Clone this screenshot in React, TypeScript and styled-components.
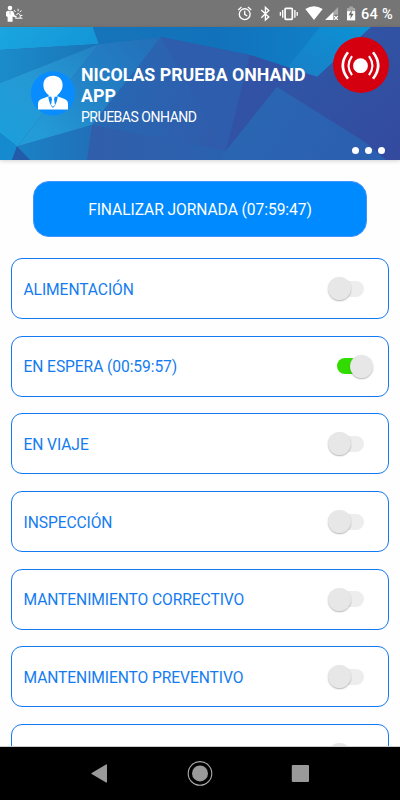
import React, { useState } from "react";
import styled, { createGlobalStyle } from "styled-components";

const GlobalStyle = createGlobalStyle`
  * { box-sizing: border-box; }
  body { margin: 0; background: #fff; font-family: Roboto, "Liberation Sans", sans-serif; }
  button { font: inherit; border: 0; padding: 0; background: none; }
  svg { display: block; flex: none; }
`;

const Screen = styled.div`
  width: 400px;
  height: 800px;
  display: flex;
  flex-direction: column;
  overflow: hidden;
  background: #fefefe;
`;

const StatusBar = styled.div`
  flex: none;
  height: 27px;
  padding: 0 7px 0 6px;
  display: flex;
  align-items: center;
  justify-content: space-between;
  background: #757575;
  color: #fff;
`;

const BatteryText = styled.span`
  font-size: 14.6px;
  font-weight: 500;
  line-height: 27px;
  letter-spacing: 0.25px;
  white-space: nowrap;
  padding-top: 1px;
`;

const StatusIcons = styled.div`
  display: flex;
  align-items: center;
`;

const Header = styled.header`
  position: relative;
  flex: none;
  height: 133px;
  display: flex;
  align-items: flex-start;
  border-bottom: 1px solid #0b2f91;
  box-shadow: 0 1px 4px rgba(0, 0, 0, 0.18);
  color: #fff;
`;

const Backdrop = styled.svg`
  position: absolute;
  inset: 0;
`;

const Profile = styled.div`
  position: relative;
  display: flex;
  align-items: flex-start;
  width: 333px;
  padding: 37px 0 0 31px;
`;

const Avatar = styled.div`
  flex: none;
  margin: 7px 6px 0 0;
`;

const Name = styled.h1`
  margin: 0;
  font-size: 17.8px;
  line-height: 21px;
  font-weight: 700;
  width: 240px;
`;

const Company = styled.div`
  margin-top: 1px;
  font-size: 14px;
  line-height: 20px;
  letter-spacing: -0.47px;
`;

const HeaderActions = styled.div`
  position: relative;
  flex: 1;
  height: 100%;
  padding-top: 10px;
  display: flex;
  flex-direction: column;
`;

const Live = styled.button`
  width: 56px;
  height: 56px;
  border-radius: 50%;
  background: #d5000f;
`;

const Dots = styled.button`
  display: flex;
  gap: 6px;
  margin: 54px 0 0 19px;
`;

const Dot = styled.span`
  width: 7px;
  height: 7px;
  border-radius: 50%;
  background: #fff;
`;

const Content = styled.main`
  flex: 1;
  min-height: 0;
  overflow: hidden;
  display: flex;
  flex-direction: column;
  padding: 21px 11px 0;
`;

const EndButton = styled.button`
  flex: none;
  height: 56px;
  margin: 0 22px 21px;
  border: 1px solid #3f94ff;
  border-radius: 16px;
  background: #008aff;
  color: #fff;
  font-size: 15.6px;
  letter-spacing: -0.06px;
  padding-top: 2px;
`;

const List = styled.div`
  display: flex;
  flex-direction: column;
  gap: 16.7px;
`;

const Card = styled.div`
  flex: none;
  height: 61px;
  border: 1px solid #1478f5;
  border-radius: 11px;
  padding: 0 15px 0 11.5px;
  display: flex;
  align-items: center;
  justify-content: space-between;
  background: #fff;
  color: #147cf0;
  font-size: 15.6px;
  letter-spacing: -0.08px;
`;

const CardLabel = styled.span`
  padding-top: 2px;
  white-space: nowrap;
`;

const Toggle = styled.button<{ $on: boolean }>`
  width: 46px;
  height: 24px;
  display: flex;
  align-items: center;
  justify-content: ${(p) => (p.$on ? "flex-end" : "flex-start")};
`;

const Track = styled.span<{ $on: boolean }>`
  display: flex;
  align-items: center;
  justify-content: ${(p) => (p.$on ? "flex-end" : "flex-start")};
  width: 27px;
  height: 16px;
  margin: ${(p) => (p.$on ? "0 9px 0 0" : "0 0 0 10px")};
  border-radius: 8px;
  background: ${(p) => (p.$on ? "#32dc00" : "#ededed")};
`;

const Knob = styled.span<{ $on: boolean }>`
  flex: none;
  width: 23px;
  height: 23px;
  margin: ${(p) => (p.$on ? "0 -9px 0 0" : "0 0 0 -9px")};
  border-radius: 50%;
  background: #e7e7e7;
  box-shadow: 0 1px 1.5px rgba(0, 0, 0, 0.28);
`;

const NavBar = styled.nav`
  flex: none;
  height: 54px;
  border-top: 1px solid #ccc;
  background: #000;
  display: flex;
  justify-content: center;
  align-items: center;
  gap: 75px;
`;

const Facets = () => (
  <Backdrop width="400" height="133" viewBox="0 0 400 133">
    <defs>
      <linearGradient id="cyan" x1="0" y1="0" x2="1" y2="0.2">
        <stop offset="0" stopColor="#1aa6e0" />
        <stop offset="1" stopColor="#1497d7" />
      </linearGradient>
      <linearGradient id="band" x1="0" y1="0" x2="1" y2="0">
        <stop offset="0" stopColor="#1b8ccb" />
        <stop offset="1" stopColor="#1a74b6" />
      </linearGradient>
      <linearGradient id="wedge" x1="1" y1="0" x2="0.2" y2="1">
        <stop offset="0" stopColor="#2381c2" />
        <stop offset="0.55" stopColor="#2599d4" />
        <stop offset="1" stopColor="#1c9edb" />
      </linearGradient>
      <linearGradient id="kite" x1="0" y1="0.6" x2="1" y2="0">
        <stop offset="0" stopColor="#239bd7" />
        <stop offset="0.5" stopColor="#237fc4" />
        <stop offset="1" stopColor="#236fb8" />
      </linearGradient>
      <linearGradient id="top" x1="0" y1="0" x2="1" y2="0">
        <stop offset="0" stopColor="#1674b9" />
        <stop offset="0.55" stopColor="#1172bb" />
        <stop offset="1" stopColor="#107fc7" />
      </linearGradient>
      <linearGradient id="bright" x1="0" y1="1" x2="1" y2="0">
        <stop offset="0" stopColor="#1a7fc6" />
        <stop offset="1" stopColor="#0c92d5" />
      </linearGradient>
      <linearGradient id="centre" x1="0" y1="0" x2="1" y2="0.2">
        <stop offset="0" stopColor="#266ab5" />
        <stop offset="1" stopColor="#2f5dac" />
      </linearGradient>
      <linearGradient id="bottom" x1="0" y1="0" x2="1" y2="0">
        <stop offset="0" stopColor="#315eaa" />
        <stop offset="1" stopColor="#2a62b0" />
      </linearGradient>
      <linearGradient id="low" x1="0" y1="0" x2="1" y2="0">
        <stop offset="0" stopColor="#1a82c6" />
        <stop offset="1" stopColor="#2170b8" />
      </linearGradient>
      <linearGradient id="lens" x1="0" y1="0" x2="1" y2="0.3">
        <stop offset="0" stopColor="#2a68b4" />
        <stop offset="1" stopColor="#2b5faf" />
      </linearGradient>
      <linearGradient id="right" x1="0" y1="0" x2="1" y2="1">
        <stop offset="0" stopColor="#2e5aa9" />
        <stop offset="1" stopColor="#344a9e" />
      </linearGradient>
    </defs>
    <rect width="400" height="133" fill="#2c60ae" />
    <path d="M0 0H93L99 17L0 23Z" fill="url(#cyan)" />
    <path d="M0 23L99 17L0 56Z" fill="url(#band)" />
    <path d="M0 56L99 17L17 119.5L0 106Z" fill="url(#wedge)" />
    <path d="M93 0H168L161 10L99 17Z" fill="#1b72b6" />
    <path d="M99 17L161 10L92 98L17 119.5Z" fill="url(#kite)" />
    <path d="M93 0H320L317 50L250 28L161 10L99 17Z" fill="url(#top)" />
    <path d="M320 0H371L317 50L288 40Z" fill="url(#bright)" />
    <path d="M161 10L226 124L92 98Z" fill="url(#centre)" />
    <path d="M161 10L250 28L236 84L226 124Z" fill="#2d5dac" />
    <path d="M92 98L226 124L222 133H87Z" fill="url(#bottom)" />
    <path d="M17 119.5L92 98L87 133H30Z" fill="url(#low)" />
    <path d="M0 106L17 119.5L12 133H0Z" fill="#158ace" />
    <path d="M17 119.5L30 133H12Z" fill="#235ba8" />
    <path d="M371 0H400V133H384L277 60L250 28L317 50Z" fill="url(#right)" />
    <path d="M250 28L317 50L277 60L226 124L236 84Z" fill="#3253a5" />
    <path d="M277 60L365 115L386 133H222L226 124Z" fill="url(#lens)" />
  </Backdrop>
);

const WorkerIcon = () => (
  <svg width="17" height="18" viewBox="0 0 17 18" fill="#fff">
    <circle cx="4" cy="3" r="2.3" />
    <path d="M0 7Q0.5 5.8 4 5.8Q7 5.8 7.6 7L8.5 10L11 11.8L10.2 12.8L6.6 11.5V16.8H1.6V12L0 11Z" />
    <path d="M9.2 13.2H16.5M10.3 9.5Q13 7.2 14.2 10V13M8 5L9.5 7M12.1 3.8V6.2M15.4 5.4L13.8 7.2M14.4 10.4H16.4" stroke="#fff" strokeWidth="1" fill="none" />
    <path d="M3.5 6.6L4 10.6L4.6 6.6Z" fill="#999" />
  </svg>
);

const StatusGlyphs = () => (
  <svg width="124" height="27" viewBox="237 0 124 27" fill="#fff">
    <g fill="none" stroke="#fff" strokeWidth="1.35">
      <circle cx="244.7" cy="14.2" r="5.4" />
      <path d="M244.7 10.8V14.3L247.3 16M238.2 10L241.5 7.1M247.9 7.1L251.2 10" />
      <path d="M261.3 10L268.8 17L265.4 20V7.4L268.8 10.6L261.3 17.7" />
      <rect x="285.1" y="8.3" width="7.2" height="11.1" rx="0.8" strokeWidth="1.7" />
      <path d="M282.7 10V17.7M280.4 12V15.8M294.9 10V17.7M297.2 12V15.8" />
    </g>
    <path d="M305.3 9.1Q314 3.5 322.7 9.1L314 20.1Z" />
    <path d="M338.1 7V14.7H333.3V19.9H325.2Z" fill="#a9a9a9" />
    <path d="M333.3 12V19.9H325.2Z" />
    <path d="M334.2 16L337.8 19.8M337.8 16L334.2 19.8" stroke="#fff" strokeWidth="1.2" />
    <path d="M349.2 6.5H353V8H355.2V12H347V8H349.2Z" fill="#a5a5a5" />
    <path d="M347 11.2H355.2V20.4H347Z" />
    <path d="M352 9.8L348.6 15.2H350.8L350.2 19L353.6 13.8H351.4Z" fill="#696969" />
  </svg>
);

const AvatarIcon = () => (
  <svg width="44" height="45" viewBox="0 0 44 45">
    <circle cx="22" cy="22.3" r="22.1" fill="#088cff" />
    <path
      d="M22 4.8C16 4.8 12.4 8.6 12.4 14C12.4 18.7 15 22 17.3 23.7C18.2 24.7 17.7 25.3 16.4 25.8L11 27.8C7.8 29 7 30.8 7 33.5V38.4H37V33.5C37 30.8 36.2 29 33 27.8L27.6 25.8C26.3 25.3 25.8 24.7 26.7 23.7C29 22 31.6 18.7 31.6 14C31.6 8.6 28 4.8 22 4.8Z"
      fill="#fff"
    />
    <path d="M17.3 25.4L22 26L26.8 25.4C26.2 29.5 24.8 34.5 22 36.8C19.2 34.5 17.8 29.5 17.3 25.4Z" fill="#088cff" />
    <path d="M20.2 25.8H23.8L23 28.2L24 34L22 35.7L20 34L21 28.2Z" fill="#fff" />
  </svg>
);

const LiveIcon = () => (
  <svg width="56" height="56" viewBox="0 0 56 56" fill="none" stroke="#fff" strokeWidth="2.5">
    <circle cx="27.5" cy="28.7" r="7.4" fill="#fff" stroke="none" />
    <path d="M19 19.2Q12.2 28.7 19 38.2M36 19.2Q42.8 28.7 36 38.2" strokeWidth="2.1" />
    <path d="M15 15.3Q4.6 28.5 15 41.7M40 15.3Q50.4 28.5 40 41.7" strokeWidth="2.6" />
  </svg>
);

type Activity = { label: string; on?: boolean };

const activities: Activity[] = [
  { label: "ALIMENTACIÓN" },
  { label: "EN ESPERA (00:59:57)", on: true },
  { label: "EN VIAJE" },
  { label: "INSPECCIÓN" },
  { label: "MANTENIMIENTO CORRECTIVO" },
  { label: "MANTENIMIENTO PREVENTIVO" },
  { label: "" },
];

const ActivityCard = ({ label, on = false }: Activity) => {
  const [active, setActive] = useState(on);
  return (
    <Card>
      <CardLabel>{label}</CardLabel>
      <Toggle $on={active} role="switch" aria-checked={active} onClick={() => setActive(!active)}>
        <Track $on={active}>
          <Knob $on={active} />
        </Track>
      </Toggle>
    </Card>
  );
};

export default function App() {
  return (
    <Screen>
      <GlobalStyle />
      <StatusBar>
        <WorkerIcon />
        <StatusIcons>
          <StatusGlyphs />
          <BatteryText>64 %</BatteryText>
        </StatusIcons>
      </StatusBar>
      <Header>
        <Facets />
        <Profile>
          <Avatar>
            <AvatarIcon />
          </Avatar>
          <div>
            <Name>NICOLAS PRUEBA ONHAND APP</Name>
            <Company>PRUEBAS ONHAND</Company>
          </div>
        </Profile>
        <HeaderActions>
          <Live>
            <LiveIcon />
          </Live>
          <Dots>
            <Dot />
            <Dot />
            <Dot />
          </Dots>
        </HeaderActions>
      </Header>
      <Content>
        <EndButton>FINALIZAR JORNADA (07:59:47)</EndButton>
        <List>
          {activities.map((a, i) => (
            <ActivityCard key={i} {...a} />
          ))}
        </List>
      </Content>
      <NavBar>
        <svg width="26" height="26" viewBox="0 0 26 26" fill="#999">
          <path d="M5.7 11.9L20 3.5Q21 3 21 4.1V20.9Q21 22 20 21.4L5.7 13Q4.8 12.5 5.7 11.9Z" />
        </svg>
        <svg width="26" height="26" viewBox="0 0 26 26" fill="#999">
          <circle cx="13" cy="12.4" r="8" />
          <circle cx="13" cy="12.4" r="11.8" fill="none" stroke="#aaa" strokeWidth="1.1" />
        </svg>
        <svg width="26" height="26" viewBox="0 0 26 26" fill="#999">
          <rect x="3.8" y="4" width="17.2" height="17" rx="1" />
        </svg>
      </NavBar>
    </Screen>
  );
}
